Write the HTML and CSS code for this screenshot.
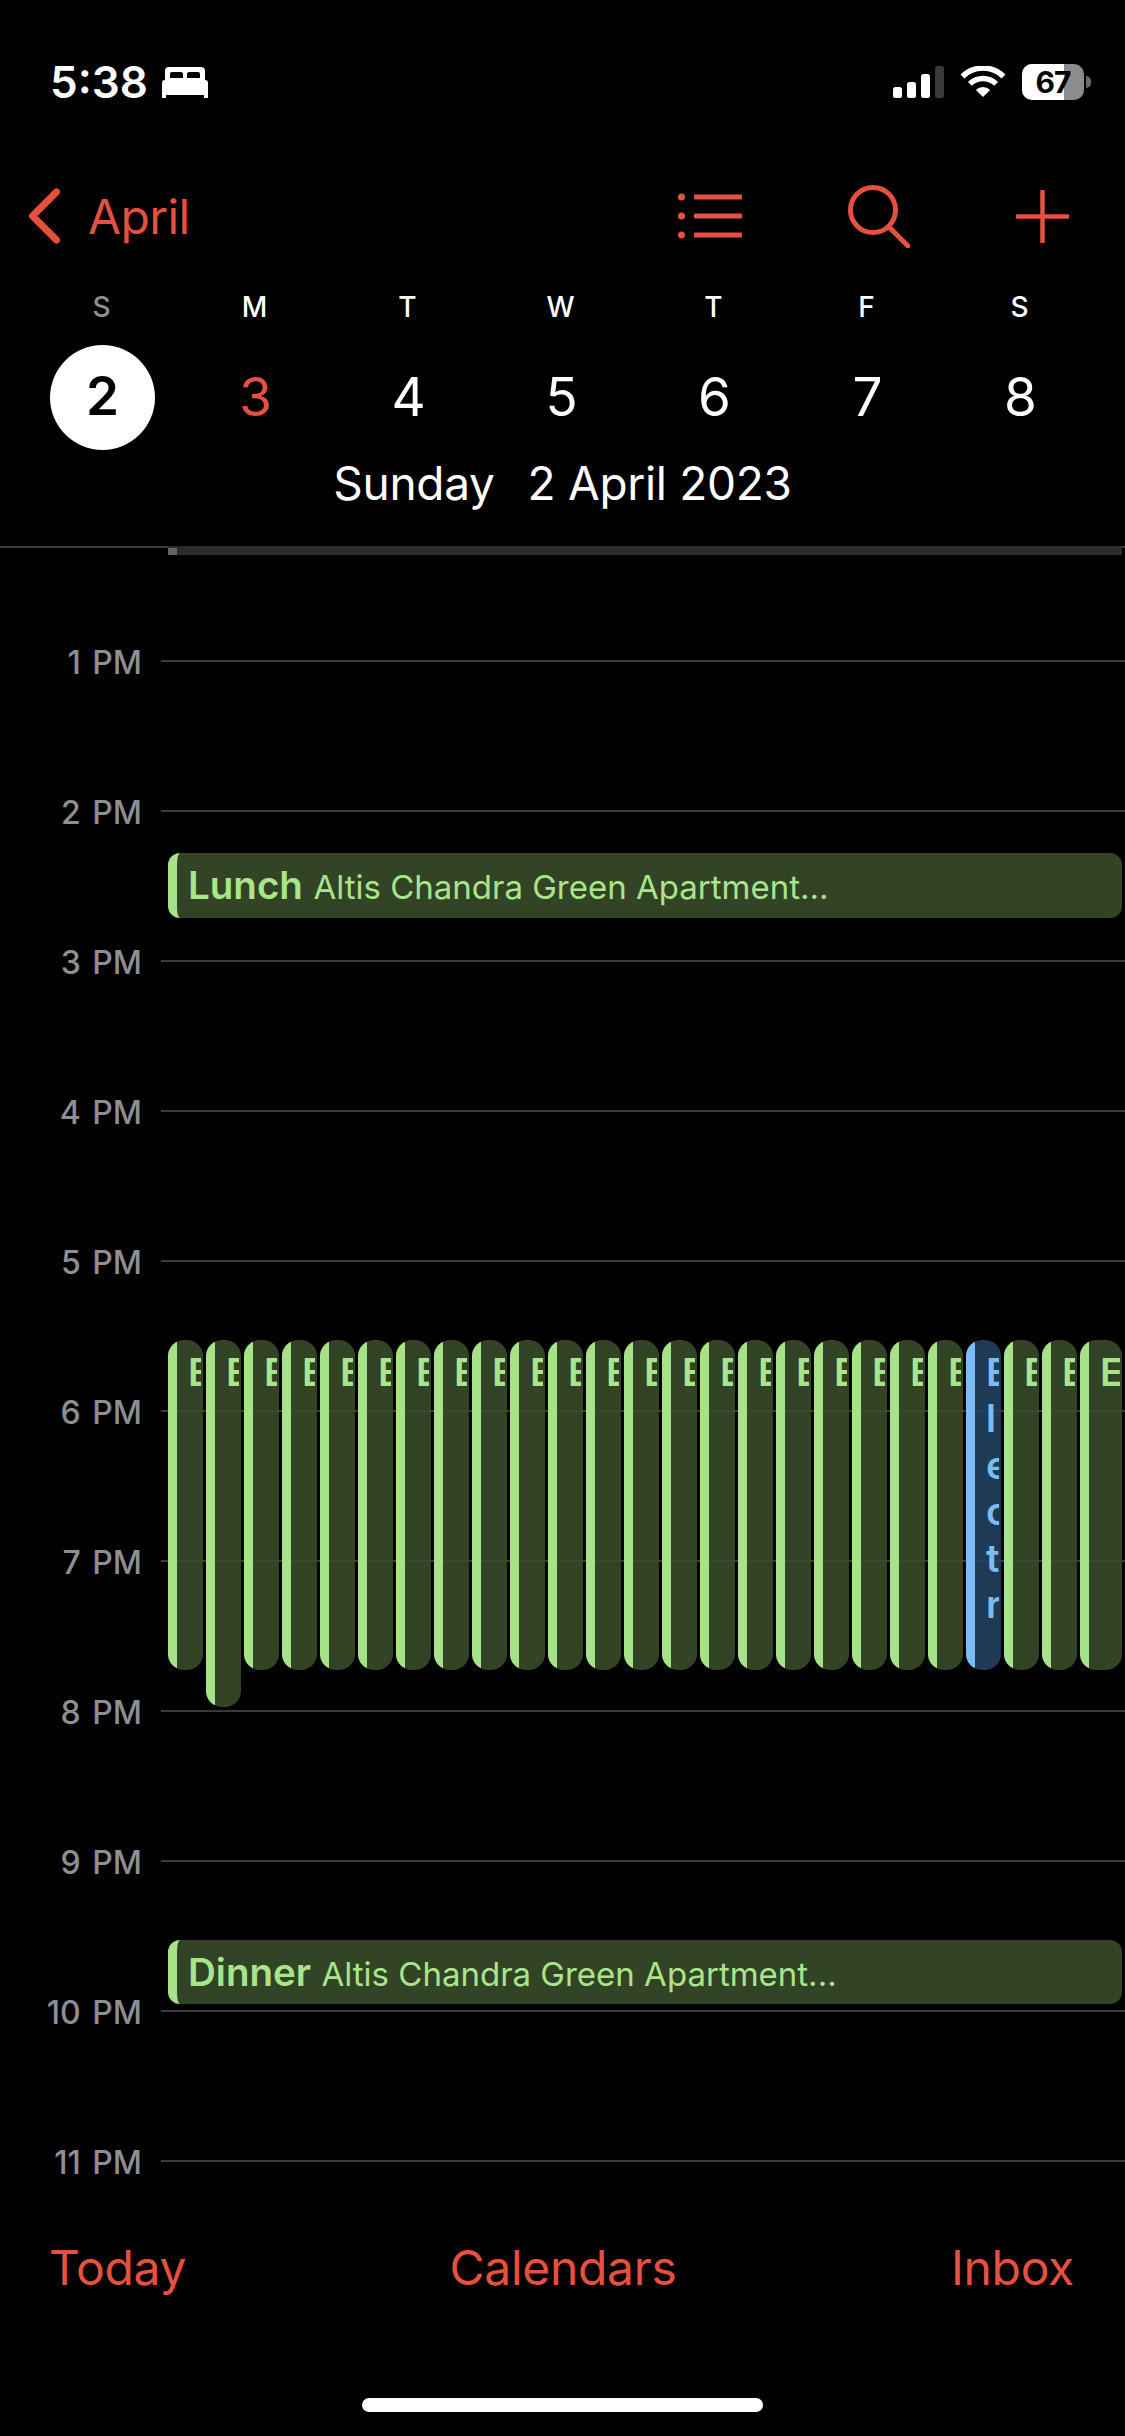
FILE: index.html
```html
<!DOCTYPE html>
<html lang="en">
<head>
<meta charset="utf-8">
<title>Calendar</title>
<link rel="stylesheet" href="styles.css">
</head>
<body>
<main class="screen">
  <header class="status">
    <div class="status-left">
      <span class="time">5:38</span>
      <svg class="bed" viewBox="0 0 46 31"><path fill="#fff" fill-rule="evenodd" d="M7 0h32a4 4 0 0 1 4 4v9H3V4a4 4 0 0 1 4-4zM10 5a2 2 0 0 0-2 2v4h13V7a2 2 0 0 0-2-2zM27 5a2 2 0 0 0-2 2v4h13V7a2 2 0 0 0-2-2zM3 13h40a3 3 0 0 1 3 3v15h-4v-3H4v3H0V16a3 3 0 0 1 3-3z"/></svg>
    </div>
    <div class="status-right">
      <svg class="signal" viewBox="0 0 51 32"><rect x="0" y="21" width="9" height="11" rx="2.500" fill="#fff"/><rect x="14" y="16" width="9" height="16" rx="2.500" fill="#fff"/><rect x="28" y="8" width="9" height="24" rx="2.500" fill="#fff"/><rect x="42" y="0" width="9" height="32" rx="2.500" fill="#3a3a3c"/></svg>
      <svg class="wifi" viewBox="0 0 46 32"><g fill="none" stroke="#fff" stroke-width="5.500"><path d="M2.500 10.500A29 29 0 0 1 43.500 10.500"/><path d="M9.900 17.900A18.500 18.500 0 0 1 36.100 17.900"/></g><path fill="#fff" d="M23 31 15.900 23.900A10 10 0 0 1 30.100 23.900Z"/></svg>
      <div class="battery"><div class="battery-body"><div class="battery-fill"></div><span class="battery-text">67</span></div><div class="battery-nub"></div></div>
    </div>
  </header>

  <nav class="nav">
    <a class="back">
      <svg class="chev" viewBox="0 0 33 56"><path d="M28.500 4 4.500 28l24 24" fill="none" stroke="#e5503f" stroke-width="7" stroke-linecap="round" stroke-linejoin="round"/></svg>
      <span>April</span>
    </a>
    <div class="nav-actions">
      <svg class="ico-list" viewBox="0 0 64 46"><g fill="#e5503f"><circle cx="3.500" cy="4" r="3.500"/><circle cx="3.500" cy="23" r="3.500"/><circle cx="3.500" cy="42" r="3.500"/><rect x="16" y="1.500" width="48" height="5" rx="1"/><rect x="16" y="20.500" width="48" height="5" rx="1"/><rect x="16" y="39.500" width="48" height="5" rx="1"/></g></svg>
      <svg class="ico-search" viewBox="0 0 62 63"><g fill="none" stroke="#e5503f" stroke-width="5" stroke-linecap="round"><circle cx="25" cy="25" r="22.500"/><path d="M41 42 60 61"/></g></svg>
      <svg class="ico-plus" viewBox="0 0 53 53"><path d="M26.500 1v51M1 26.500h51" fill="none" stroke="#e5503f" stroke-width="4.500" stroke-linecap="round"/></svg>
    </div>
  </nav>

  <section class="week">
    <span class="wd wd-muted">S</span><span class="wd">M</span><span class="wd">T</span><span class="wd">W</span><span class="wd">T</span><span class="wd">F</span><span class="wd">S</span>
    <span class="day"><b class="today">2</b></span><span class="day day-red">3</span><span class="day">4</span><span class="day">5</span><span class="day">6</span><span class="day">7</span><span class="day">8</span>
  </section>

  <div class="date"><span>Sunday</span><span>2 April 2023</span></div>

  <div class="allday"><i class="allday-tab"></i></div>

  <section class="timeline">
    <div class="hour"><span class="hour-label">1 PM</span><i class="rule"></i></div>
    <div class="hour"><span class="hour-label">2 PM</span><i class="rule"></i></div>
    <div class="hour"><span class="hour-label">3 PM</span><i class="rule"></i></div>
    <div class="hour"><span class="hour-label">4 PM</span><i class="rule"></i></div>
    <div class="hour"><span class="hour-label">5 PM</span><i class="rule"></i></div>
    <div class="hour"><span class="hour-label">6 PM</span><i class="rule"></i></div>
    <div class="hour"><span class="hour-label">7 PM</span><i class="rule"></i></div>
    <div class="hour"><span class="hour-label">8 PM</span><i class="rule"></i></div>
    <div class="hour"><span class="hour-label">9 PM</span><i class="rule"></i></div>
    <div class="hour"><span class="hour-label">10 PM</span><i class="rule"></i></div>
    <div class="hour"><span class="hour-label">11 PM</span><i class="rule"></i></div>

    <article class="event event-lunch"><b>Lunch</b> <span>Altis Chandra Green Apartment...</span></article>
    <article class="event event-dinner"><b>Dinner</b> <span>Altis Chandra Green Apartment...</span></article>

    <div class="cols">
      <div class="col"><div class="col-text">E</div></div>
      <div class="col col-long"><div class="col-text">E</div></div>
      <div class="col"><div class="col-text">E</div></div>
      <div class="col"><div class="col-text">E</div></div>
      <div class="col"><div class="col-text">E</div></div>
      <div class="col"><div class="col-text">E</div></div>
      <div class="col"><div class="col-text">E</div></div>
      <div class="col"><div class="col-text">E</div></div>
      <div class="col"><div class="col-text">E</div></div>
      <div class="col"><div class="col-text">E</div></div>
      <div class="col"><div class="col-text">E</div></div>
      <div class="col"><div class="col-text">E</div></div>
      <div class="col"><div class="col-text">E</div></div>
      <div class="col"><div class="col-text">E</div></div>
      <div class="col"><div class="col-text">E</div></div>
      <div class="col"><div class="col-text">E</div></div>
      <div class="col"><div class="col-text">E</div></div>
      <div class="col"><div class="col-text">E</div></div>
      <div class="col"><div class="col-text">E</div></div>
      <div class="col"><div class="col-text">E</div></div>
      <div class="col"><div class="col-text">E</div></div>
      <div class="col col-blue"><div class="col-text">Electr</div></div>
      <div class="col"><div class="col-text">E</div></div>
      <div class="col"><div class="col-text">E</div></div>
      <div class="col col-wide"><div class="col-text">E</div></div>
    </div>
  </section>

  <footer class="toolbar">
    <a>Today</a><a class="toolbar-mid">Calendars</a><a class="toolbar-end">Inbox</a>
  </footer>
  <div class="home-wrap"><i class="home"></i></div>
</main>
</body>
</html>
```

FILE: styles.css
```css
* { box-sizing: border-box; }
html, body { margin: 0; padding: 0; background: #000; }
.screen {
  width: 1125px; height: 2436px; overflow: hidden;
  display: flex; flex-direction: column;
  background: #000; color: #fff;
  font-family: Inter, "Liberation Sans", sans-serif;
}

/* status bar */
.status { height: 164px; flex: none; display: flex; justify-content: space-between; align-items: flex-start; padding: 64px 34px 0 50px; }
.status-left { display: flex; align-items: flex-start; gap: 14px; }
.time { font-size: 44px; line-height: 36px; font-weight: 600; }
.bed { width: 46px; height: 31px; margin-top: 3px; }
.status-right { display: flex; align-items: flex-start; }
.signal { width: 51px; height: 32px; margin-top: 2px; }
.wifi { width: 46px; height: 32px; margin: 2px 16px 0 16px; }
.battery { display: flex; align-items: center; }
.battery-body { position: relative; width: 62px; height: 36px; border-radius: 10px; background: #8c8c8e; overflow: hidden; }
.battery-fill { width: 42px; height: 36px; background: #fff; }
.battery-text { position: absolute; inset: 0; text-align: center; color: #000; font-size: 30px; line-height: 36px; font-weight: 700; letter-spacing: -1px; }
.battery-nub { width: 5px; height: 12px; margin-left: 2px; border-radius: 0 6px 6px 0; background: #6b6b6d; }

/* nav */
.nav { height: 112px; flex: none; display: flex; justify-content: space-between; align-items: flex-start; padding: 21px 56px 0 28px; }
.back { display: flex; align-items: flex-start; gap: 27px; color: #e5503f; font-size: 48px; line-height: 56px; }
.chev { width: 33px; height: 56px; margin-top: 3px; }
.back span { margin-top: 4px; letter-spacing: -.6px; }
.nav-actions { display: flex; align-items: flex-start; }
.ico-list { width: 64px; height: 46px; margin-top: 8px; margin-right: 106px; }
.ico-search { width: 62px; height: 63px; margin-right: 106px; }
.ico-plus { width: 53px; height: 53px; margin-top: 5px; }

/* week strip */
.week { flex: none; display: grid; grid-template-columns: repeat(7, 153px); padding: 0 26px; grid-template-rows: 69px 105px; }
.wd { text-align: center; font-size: 28px; line-height: 36px; font-weight: 500; margin: 13px 2px 0 0; }
.wd-muted { color: #8e8e93; }
.day { display: flex; align-items: center; justify-content: center; font-size: 53px; font-weight: 400; padding-bottom: 2px; }
.day-red { color: #e5503f; }
.today { width: 105px; height: 105px; margin-bottom: -2px; padding-bottom: 3px; border-radius: 50%; background: #fff; color: #000; font-weight: 600; display: flex; align-items: center; justify-content: center; }
.date { flex: none; height: 96px; padding-top: 5px; display: flex; justify-content: center; gap: 33px; font-size: 46px; line-height: 56px; letter-spacing: -.3px; }

/* all day strip */
.allday { flex: none; height: 9px; padding: 0 3px 0 168px; border-top: 2px solid #38383a; }
.allday-tab { display: block; height: 9px; margin-top: -2px; background: #2c2c2e; position: relative; }
.allday-tab::before { content: ""; position: absolute; left: 0; top: 2px; width: 9px; height: 7px; background: #636366; }

/* timeline */
.timeline { flex: 1; position: relative; overflow: hidden; padding-top: 105px; }
.hour { height: 150px; display: flex; align-items: flex-start; }
.hour-label { width: 142px; flex: none; margin-top: -15px; text-align: right; font-size: 32px; line-height: 36px; font-weight: 500; color: #8e8e93; word-spacing: 3px; }
.rule { flex: 1; height: 2px; margin-left: 19px; background: #3a3a3c; }

.event { position: absolute; left: 168px; width: 954px; border-radius: 12px; border-left: 9px solid #a6e388; background: #334326; color: #a9e58a; padding-left: 11px; white-space: nowrap; overflow: hidden; }
.event b { font-size: 38.500px; font-weight: 600; }
.event span { font-size: 33px; margin-left: 6px; }
.event-lunch { top: 298px; height: 65px; line-height: 64px; }
.event-dinner { top: 1385px; height: 64px; line-height: 64px; }

.cols { position: absolute; left: 168px; top: 785px; display: flex; align-items: flex-start; gap: 3px; }
.col { width: 35px; height: 330px; flex: none; display: flex; border-radius: 16px; overflow: hidden; background: rgba(58, 76, 43, .88); color: #a9e58a; }
.col::before { content: ""; width: 9px; flex: none; background: #a6e388; }
.col-long { height: 367px; }
.col-wide { width: 42px; }
.col-blue { background: rgba(35, 66, 96, .88); color: #7bbcf5; }
.col-blue::before { background: #7bbcf5; }
.col-text { flex: 1; min-width: 0; margin: 0 2px 0 11px; overflow: hidden; font-size: 38px; line-height: 46.400px; font-weight: 600; padding-top: 9px; word-break: break-all; }

/* toolbar */
.toolbar { flex: none; height: 140px; display: grid; grid-template-columns: 1fr auto 1fr; padding: 40px 51px 0 49px; color: #e5503f; font-size: 48px; line-height: 56px; letter-spacing: -.3px; }
.toolbar-mid { margin-left: 3px; }
.toolbar-end { justify-self: end; }
.home-wrap { flex: none; height: 96px; padding-top: 58px; display: flex; justify-content: center; }
.home { width: 401px; height: 14px; border-radius: 7px; background: #fff; }
```
